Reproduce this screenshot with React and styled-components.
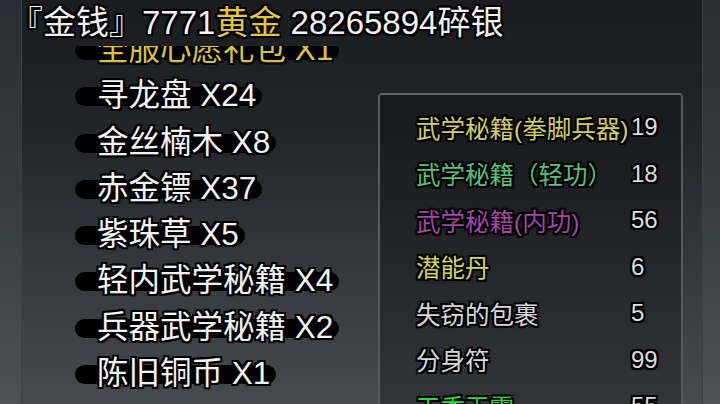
import styled, { createGlobalStyle } from "styled-components";

const GlobalStyle = createGlobalStyle`
  html, body {
    margin: 0;
    padding: 0;
    background: #1c1e21;
  }
  body {
    font-family: "Liberation Sans", "Noto Sans CJK SC", sans-serif;
  }
`;

const outline = `
  text-shadow:
    -2px -2px 0 #000, 2px -2px 0 #000, -2px 2px 0 #000, 2px 2px 0 #000,
    0 2px 0 #000, 0 -2px 0 #000, 2px 0 0 #000, -2px 0 0 #000,
    0 0 3px #000;
`;

const Screen = styled.div`
  width: 720px;
  height: 404px;
  display: flex;
  overflow: hidden;
`;

const SideStrip = styled.div`
  flex: 0 0 ${({ $w }) => $w}px;
  box-sizing: border-box;
  background: linear-gradient(to bottom, #2a2d31 0%, #363a3e 45%, #4c5257 100%);
  border-${({ $side }) => $side}: 1px solid #3c4044;
`;

const Main = styled.div`
  flex: 1;
  display: flex;
  flex-direction: column;
  overflow: hidden;
  background: linear-gradient(to bottom, #1a1c1f 0%, #24272a 35%, #34373b 65%, #474b4f 100%);
`;

const Header = styled.div`
  flex: 0 0 45px;
  margin-left: -12px;
  font-size: 33px;
  line-height: 46px;
  color: #f2f2f2;
  white-space: nowrap;
  position: relative;
  z-index: 2;
  ${outline}
`;

const Gold = styled.span`
  color: #e6c63a;
`;

const Body = styled.div`
  flex: 1;
  display: flex;
  min-height: 0;
`;

const ListViewport = styled.div`
  flex: 0 0 356px;
  overflow: hidden;
`;

const List = styled.div`
  display: flex;
  flex-direction: column;
  padding-left: 53px;
  margin-top: -20px;
`;

const Item = styled.div`
  position: relative;
  height: 46.3px;
  line-height: 46px;
  font-size: 31.5px;
  white-space: nowrap;
  color: ${({ $color }) => $color || "#f4f4f4"};
  align-self: flex-start;
  padding-left: 22px;

  &::before {
    content: "";
    position: absolute;
    left: 0;
    right: -6px;
    top: 15px;
    height: 19px;
    border-radius: 10px;
    background: #000;
    filter: blur(0.5px);
  }

  span {
    position: relative;
    ${outline}
  }
`;

const Panel = styled.div`
  margin-top: 47px;
  width: 305px;
  height: 340px;
  border: 2px solid #565a5e;
  border-top-color: #62666a;
  border-radius: 4px;
  background: linear-gradient(to bottom, #17191c 0%, #212326 40%, #35383b 100%);
  padding: 9px 0 0 36px;
  box-sizing: border-box;
  display: grid;
  grid-template-columns: 215px auto;
  grid-auto-rows: 46.5px;
  align-items: center;
  flex-shrink: 0;
`;

const Label = styled.div`
  font-size: 24.5px;
  white-space: nowrap;
  color: ${({ $color }) => $color};
  ${outline}
`;

const Count = styled.div`
  font-size: 24px;
  color: #dcdcdc;
  ${outline}
`;

const items = [
  { name: "全服心愿礼包 X1", color: "#dcc23a" },
  { name: "寻龙盘 X24" },
  { name: "金丝楠木 X8" },
  { name: "赤金镖 X37" },
  { name: "紫珠草 X5" },
  { name: "轻内武学秘籍 X4" },
  { name: "兵器武学秘籍 X2" },
  { name: "陈旧铜币 X1" },
];

const stock = [
  { name: "武学秘籍(拳脚兵器)", color: "#d4cf5c", count: 19 },
  { name: "武学秘籍（轻功）", color: "#56c27a", count: 18 },
  { name: "武学秘籍(内功)", color: "#a346a6", count: 56 },
  { name: "潜能丹", color: "#d6d64a", count: 6 },
  { name: "失窃的包裹", color: "#d8d8d8", count: 5 },
  { name: "分身符", color: "#d8d8d8", count: 99 },
  { name: "天香玉露", color: "#2fd83a", count: 55 },
];

const App = () => (
  <>
    <GlobalStyle />
    <Screen>
      <SideStrip $w={22} $side="right" />
      <Main>
        <Header>
          『金钱』7771<Gold>黄金</Gold> 28265894碎银
        </Header>
        <Body>
          <ListViewport>
            <List>
              {items.map(it => (
                <Item key={it.name} $color={it.color}>
                  <span>{it.name}</span>
                </Item>
              ))}
            </List>
          </ListViewport>
          <Panel>
            {stock.map(s => [
              <Label key={s.name} $color={s.color}>{s.name}</Label>,
              <Count key={s.name + "-n"}>{s.count}</Count>,
            ])}
          </Panel>
        </Body>
      </Main>
      <SideStrip $w={18} $side="left" />
    </Screen>
  </>
);

export default App;
